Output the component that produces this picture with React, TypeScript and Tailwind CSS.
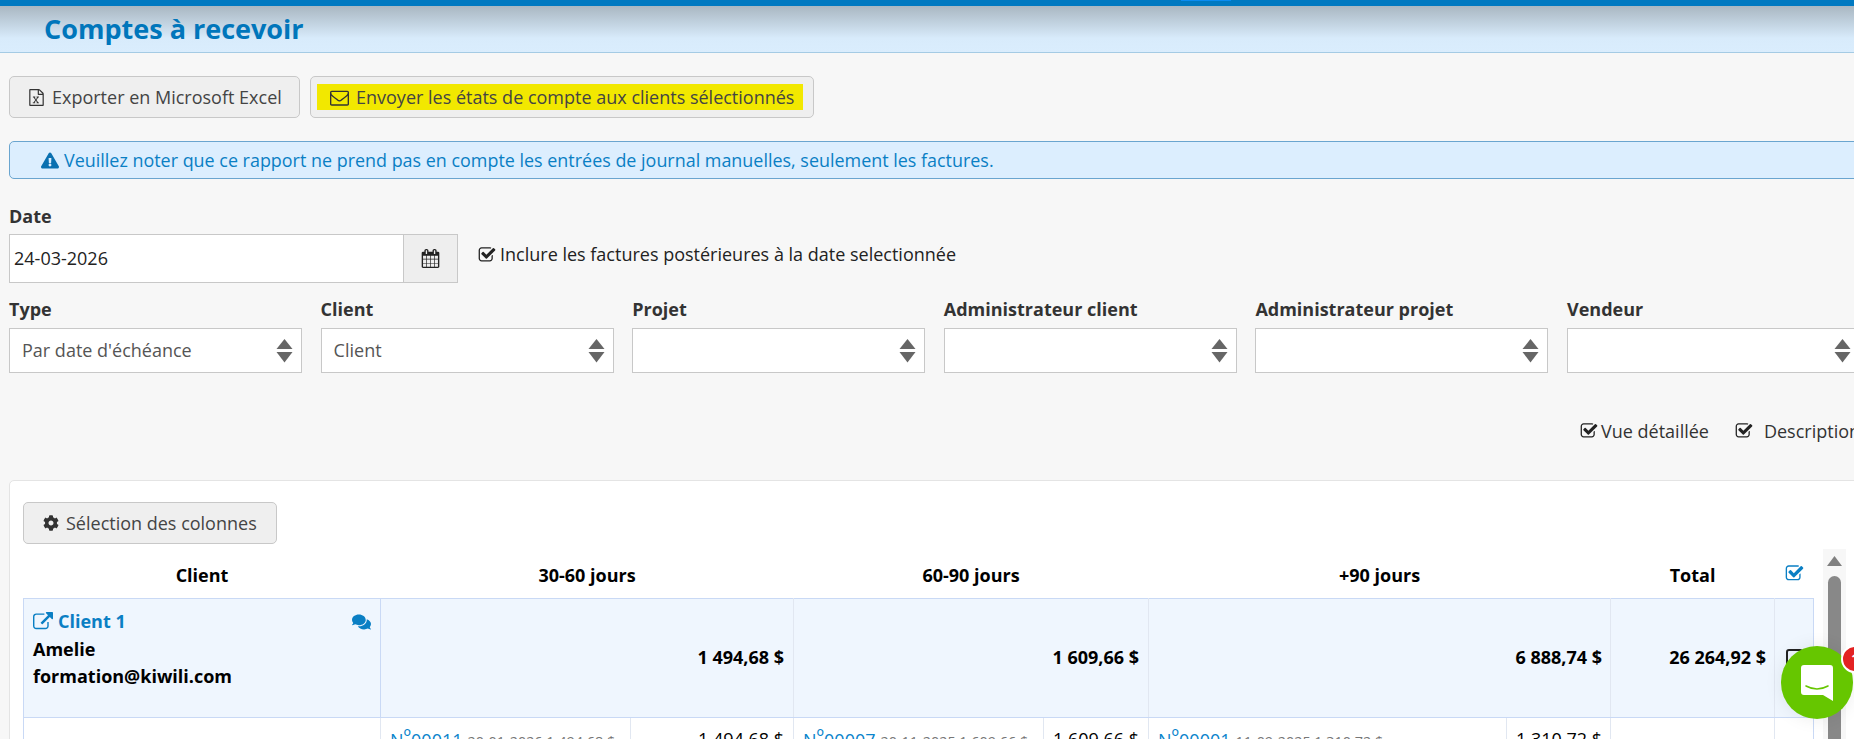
import React from "react";
import { FaExclamationTriangle, FaCog, FaComments } from "react-icons/fa";

function CheckIcon({ className }: { className: string }) {
  return (
    <svg viewBox="0 0 1792 1792" fill="currentColor" className={"shrink-0 " + className}>
      <path d="M1472 930v318q0 119-84.5 203.5t-203.5 84.5h-832q-119 0-203.5-84.5t-84.5-203.5v-832q0-119 84.5-203.5t203.5-84.5h832q63 0 117 25 15 7 18 23 3 17-9 29l-49 49q-10 10-23 10-3 0-9-2-23-6-45-6h-832q-66 0-113 47t-47 113v832q0 66 47 113t113 47h832q66 0 113-47t47-113v-254q0-13 9-22l64-64q10-10 23-10 6 0 12 3 20 8 20 29zm231-489l-814 814q-24 24-57 24t-57-24l-430-430q-24-24-24-57t24-57l110-110q24-24 57-24t57 24l263 263 647-647q24-24 57-24t57 24l110 110q24 24 24 57t-24 57z" />
    </svg>
  );
}

function LinkIcon({ className }: { className: string }) {
  return (
    <svg viewBox="0 0 1792 1792" fill="currentColor" className={"shrink-0 " + className}>
      <path d="M1408 928v320q0 119-84.5 203.5t-203.5 84.5h-832q-119 0-203.5-84.5t-84.5-203.5v-832q0-119 84.5-203.5t203.5-84.5h704q14 0 23 9t9 23v64q0 14-9 23t-23 9h-704q-66 0-113 47t-47 113v832q0 66 47 113t113 47h832q66 0 113-47t47-113v-320q0-14 9-23t23-9h64q14 0 23 9t9 23zm384-864v512q0 26-19 45t-45 19-45-19l-176-176-652 652q-10 10-23 10t-23-10l-114-114q-10-10-10-23t10-23l652-652-176-176q-19-19-19-45t19-45 45-19h512q26 0 45 19t19 45z" />
    </svg>
  );
}

function EnvelopeIcon({ className }: { className: string }) {
  return (
    <svg viewBox="0 0 1792 1792" fill="currentColor" className={"shrink-0 " + className}>
      <path d="M1664 1504v-768q-32 36-69 66-268 206-426 338-51 43-83 67t-86.5 48.5-102.5 24.5h-2q-48 0-102.5-24.5t-86.5-48.5-83-67q-158-132-426-338-37-30-69-66v768q0 13 9.5 22.5t22.5 9.5h1472q13 0 22.5-9.5t9.5-22.5zm0-1051v-24.5l-.5-13-3-12.5-5.5-9-9-7.5-14-2.5h-1472q-13 0-22.5 9.5t-9.5 22.5q0 168 147 284 193 152 401 317 6 5 35 29.5t46 37.5 44.5 31.5 50.5 27.5 43 9h2q20 0 43-9t50.5-27.5 44.5-31.5 46-37.5 35-29.5q208-165 401-317 54-43 100.5-115.5t46.5-131.5zm128-37v1088q0 66-47 113t-113 47h-1472q-66 0-113-47t-47-113v-1088q0-66 47-113t113-47h1472q66 0 113 47t47 113z" />
    </svg>
  );
}

function CalendarIcon({ className }: { className: string }) {
  return (
    <svg viewBox="0 0 1792 1792" fill="currentColor" className={"shrink-0 " + className}>
      <path d="M192 1664h288v-288h-288v288zm352 0h320v-288h-320v288zm-352-352h288v-320h-288v320zm352 0h320v-320h-320v320zm-352-384h288v-288h-288v288zm736 736h320v-288h-320v288zm-384-736h320v-288h-320v288zm768 736h288v-288h-288v288zm-384-352h320v-320h-320v320zm-352-864v-288q0-13-9.5-22.5t-22.5-9.5h-64q-13 0-22.5 9.5t-9.5 22.5v288q0 13 9.5 22.5t22.5 9.5h64q13 0 22.5-9.5t9.5-22.5zm736 864h288v-320h-288v320zm-384-384h320v-288h-320v288zm384 0h288v-288h-288v288zm32-480v-288q0-13-9.5-22.5t-22.5-9.5h-64q-13 0-22.5 9.5t-9.5 22.5v288q0 13 9.5 22.5t22.5 9.5h64q13 0 22.5-9.5t9.5-22.5zm384-64v1280q0 52-38 90t-90 38h-1408q-52 0-90-38t-38-90v-1280q0-52 38-90t90-38h128v-96q0-66 47-113t113-47h64q66 0 113 47t47 113v96h384v-96q0-66 47-113t113-47h64q66 0 113 47t47 113v96h128q52 0 90 38t38 90z" />
    </svg>
  );
}

function ExcelIcon({ className }: { className: string }) {
  return (
    <svg viewBox="0 0 1792 1792" fill="currentColor" className={"shrink-0 " + className}>
      <path d="M1596 380q28 28 48 76t20 88v1152q0 40-28 68t-68 28h-1344q-40 0-68-28t-28-68v-1600q0-40 28-68t68-28h896q40 0 88 20t76 48zm-444-244v376h376q-10-29-22-41l-313-313q-12-12-41-22zm384 1528v-1024h-416q-40 0-68-28t-28-68v-416h-768v1536h1280z" />
      <path d="M520 800h250v90h-60l125 180 125-180h-60v-90h250v90h-70l-185 260 195 270h70v90h-260v-90h60l-130-185-130 185h60v90h-260v-90h70l200-270-180-260h-70z" />
    </svg>
  );
}

function Sort() {
  return (
    <svg width="17" height="24" viewBox="0 0 17 24" className="text-[#666] shrink-0" fill="currentColor">
      <path d="M8.5 0 L16.5 10 L0.5 10 Z" />
      <path d="M0.5 13 L16.5 13 L8.5 23.5 Z" />
    </svg>
  );
}

function Filter({ label, value }: { label: string; value?: string }) {
  return (
    <div className="w-[293px] shrink-0">
      <div className="h-[36px] pb-[2px] flex items-center font-bold text-[#333]">{label}</div>
      <div className="h-[45px] border border-[#c8c8c8] bg-white flex items-center justify-between pl-[12px] pr-[8px] text-[#555]">
        <span>{value}</span>
        <Sort />
      </div>
    </div>
  );
}

function Inv({ no, rest }: { no: string; rest: string }) {
  return (
    <span className="whitespace-nowrap">
      <span className="text-[#0a84cc] text-[18px]">
        N<span className="inline-block -translate-y-[3px] text-[20px] leading-[20px]">º</span>{no}
      </span>
      <span className="text-[#777] text-[14.4px] ml-[5px]">{rest}</span>
    </span>
  );
}

export default function App() {
  return (
    <div
      className="w-[1854px] h-[739px] overflow-hidden relative bg-[#f7f7f7] text-[18px] text-[#333]"
      style={{ fontFamily: '"Open Sans", sans-serif' }}
    >
      <div className="h-[6px] bg-[#0079c1] flex">
        <div className="ml-[1181px] w-[50px] h-[1px] bg-[#0a8cf0]" />
      </div>
      <div className="h-[47px] border-b border-[#a5cbe4] bg-gradient-to-b from-[#a9b7c2] via-[#d8ebfb] via-70% to-[#daedfd] pl-[44px] flex items-center">
        <h1 className="text-[27px] font-bold text-[#0076bb]">Comptes à recevoir</h1>
      </div>

      <div className="pl-[9px]">
        <div className="flex gap-[10px] pt-[23px]">
          <button className="w-[291px] h-[42px] bg-[#efefef] border border-[#c8c8c8] rounded-[5px] flex items-center pl-[18px] gap-[7px] text-[#444]">
            <ExcelIcon className="w-[17px] h-[17px] text-[#333]" />
            <span>Exporter en Microsoft Excel</span>
          </button>
          <button className="w-[504px] h-[42px] bg-[#efefef] border border-[#c8c8c8] rounded-[5px] px-[6px] flex items-center">
            <span className="w-[486px] h-[26px] bg-[#f2e800] flex items-center pl-[13px] gap-[7px] text-[#444]">
              <EnvelopeIcon className="w-[19px] h-[19px] text-[#333]" />
              <span className="whitespace-nowrap">Envoyer les états de compte aux clients sélectionnés</span>
            </span>
          </button>
        </div>

        <div className="mt-[23px] h-[38px] w-[1880px] bg-[#dceefe] border border-[#6aa5cf] rounded-[5px] pl-[31px] flex items-center gap-[5px] text-[#0a7fc4] text-[17.93px]">
          <FaExclamationTriangle className="w-[18px] h-[17px] text-[#0a70b0]" />
          <span>Veuillez noter que ce rapport ne prend pas en compte les entrées de journal manuelles, seulement les factures.</span>
        </div>

        <div className="mt-[21px] h-[34px] pb-[2px] font-bold flex items-center">Date</div>
        <div className="flex items-center">
          <div className="w-[395px] h-[49px] border border-[#c8c8c8] bg-white flex items-center pl-[4px] text-[#222]">24-03-2026</div>
          <div className="w-[54px] h-[49px] border border-l-0 border-[#c8c8c8] bg-[#eee] flex items-center justify-center">
            <CalendarIcon className="w-[19px] h-[19px] text-[#222]" />
          </div>
          <label className="ml-[20px] flex items-center gap-[4px] -mt-[8px] text-[#222]">
            <CheckIcon className="w-[18px] h-[18px] text-[#222]" />
            <span>Inclure les factures postérieures à la date selectionnée</span>
          </label>
        </div>

        <div className="flex gap-[18.6px] mt-[9px]">
          <Filter label="Type" value="Par date d'échéance" />
          <Filter label="Client" value="Client" />
          <Filter label="Projet" />
          <Filter label="Administrateur client" />
          <Filter label="Administrateur projet" />
          <Filter label="Vendeur" />
        </div>

        <div className="flex items-center h-[34px] mt-[41px] pl-[1571px] whitespace-nowrap text-[#333]">
          <CheckIcon className="w-[18px] h-[18px] text-[#222]" />
          <span className="ml-[3px]">Vue détaillée</span>
          <CheckIcon className="ml-[26px] w-[18px] h-[18px] text-[#222]" />
          <span className="ml-[11px]">Description</span>
        </div>

        <div className="mt-[32px] w-[1880px] bg-white border border-[#e4e4e4] rounded-[5px] pl-[13px] pt-[21px] h-[400px]">
          <button className="w-[254px] h-[42px] bg-[#efefef] border border-[#c8c8c8] rounded-[5px] flex items-center pl-[19px] gap-[7px] text-[#444]">
            <FaCog className="w-[16px] h-[16px] text-[#333]" />
            <span>Sélection des colonnes</span>
          </button>

          <div className="flex mt-[5px]">
            <table className="table-fixed w-[1790px] border-collapse text-black self-start">
              <colgroup>
                <col className="w-[357px]" />
                <col className="w-[250px]" />
                <col className="w-[163px]" />
                <col className="w-[250px]" />
                <col className="w-[105px]" />
                <col className="w-[358px]" />
                <col className="w-[104px]" />
                <col className="w-[164px]" />
                <col className="w-[39px]" />
              </colgroup>
              <thead>
                <tr className="h-[49px]">
                  <th className="pt-[5px] font-bold">Client</th>
                  <th colSpan={2} className="pt-[5px] font-bold">30-60 jours</th>
                  <th colSpan={2} className="pt-[5px] font-bold">60-90 jours</th>
                  <th colSpan={2} className="pt-[5px] font-bold">+90 jours</th>
                  <th className="pt-[5px] font-bold">Total</th>
                  <th className="pt-[5px]">
                    <CheckIcon className="w-[19px] h-[19px] text-[#0a7fc4] mx-auto -mt-[4px]" />
                  </th>
                </tr>
              </thead>
              <tbody>
                <tr className="h-[119px] bg-[#eff6fe] font-bold">
                  <td className="border border-[#c9d9f5] pl-[9px] align-top pt-[9px]">
                    <div className="flex items-center justify-between pr-[9px] text-[#0a7fc4] h-[28px]">
                      <span className="flex items-center gap-[5px]">
                        <LinkIcon className="w-[20px] h-[20px] text-[#0a7fc4]" />
                        Client 1
                      </span>
                      <FaComments className="w-[19px] h-[18px] text-[#0a7fc4]" />
                    </div>
                    <div className="leading-[27px]">Amelie</div>
                    <div className="leading-[27px]">formation@kiwili.com</div>
                  </td>
                  <td colSpan={2} className="border border-[#e1e7f1] border-y-[#c9d9f5] text-right pr-[9px]">1 494,68 $</td>
                  <td colSpan={2} className="border border-[#e1e7f1] border-y-[#c9d9f5] text-right pr-[9px]">1 609,66 $</td>
                  <td colSpan={2} className="border border-[#e1e7f1] border-y-[#c9d9f5] text-right pr-[8px]">6 888,74 $</td>
                  <td className="border border-[#e1e7f1] border-y-[#c9d9f5] text-right pr-[8px]">26 264,92 $</td>
                  <td className="border border-[#e1e7f1] border-y-[#c9d9f5] border-r-[#c9d9f5]">
                    <div className="w-[17px] h-[17px] border-2 border-[#222] rounded-[3px] ml-[11px]" />
                  </td>
                </tr>
                <tr className="h-[44px] align-top">
                  <td className="border-l border-[#c9d9f5]" />
                  <td className="border-x border-[#e1e7f1] pl-[9px] pt-[9px]"><Inv no="00011" rest="20-01-2026 1 494,68 $" /></td>
                  <td className="border-x border-[#e1e7f1] pr-[9px] pt-[8px] text-right">1 494,68 $</td>
                  <td className="border-x border-[#e1e7f1] pl-[9px] pt-[9px]"><Inv no="00007" rest="20-11-2025 1 609,66 $" /></td>
                  <td className="border-x border-[#e1e7f1] pr-[9px] pt-[8px] text-right">1 609,66 $</td>
                  <td className="border-x border-[#e1e7f1] pl-[9px] pt-[9px]"><Inv no="00001" rest="11-09-2025 1 310,72 $" /></td>
                  <td className="border-x border-[#e1e7f1] pr-[8px] pt-[8px] text-right">1 310,72 $</td>
                  <td className="border-x border-[#e1e7f1]" />
                  <td className="border-x border-[#e1e7f1] border-r-[#c9d9f5]" />
                </tr>
              </tbody>
            </table>

            <div className="ml-[9px] w-[23px] h-[220px] bg-[#f7f7f7] flex flex-col items-center pt-[7px]">
              <svg width="15" height="10" viewBox="0 0 15 10" className="text-[#808080]" fill="currentColor">
                <path d="M7.5 0 L15 10 L0 10 Z" />
              </svg>
              <div className="mt-[10px] w-[13px] h-[180px] rounded-full bg-[#888]" />
            </div>
          </div>
        </div>
      </div>

      <div className="absolute left-[1781px] top-[646px] w-[72px] h-[73px] rounded-full bg-[#66c600] flex items-center justify-center shadow-[0_0_18px_rgba(0,0,0,0.08)]">
        <svg width="32" height="36" viewBox="0 0 32 36">
          <path d="M3 0 H29 Q32 0 32 3 V36 L22 30 H3 Q0 30 0 27 V3 Q0 0 3 0 Z" fill="#fff" />
          <path d="M5 21 Q16 27 27 21" fill="none" stroke="#66c600" strokeWidth="1.6" strokeLinecap="round" />
        </svg>
      </div>
      <div className="absolute left-[1841px] top-[645px] w-[28px] h-[28px] rounded-full bg-[#e32222] border-2 border-white text-white text-[13px] font-bold flex items-center justify-center">1</div>
    </div>
  );
}
